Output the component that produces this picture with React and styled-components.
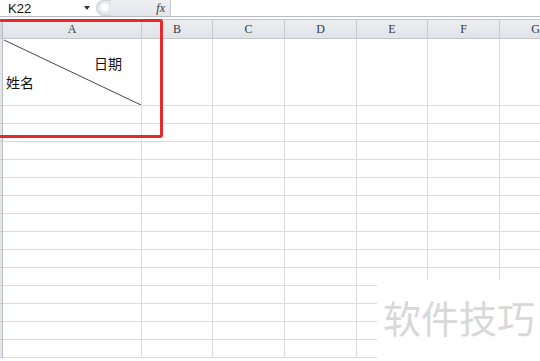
import React from 'react';
import styled, { createGlobalStyle } from 'styled-components';

const GlobalStyle = createGlobalStyle`
    * { box-sizing: border-box; }
    html, body {
        margin: 0;
        padding: 0;
        background: #ffffff;
        overflow: hidden;
    }
    body {
        font-family: "Liberation Sans", "Noto Sans CJK SC", sans-serif;
    }
`;

const COLS = ['A', 'B', 'C', 'D', 'E', 'F', 'G'];
const COL_TEMPLATE = '3px 139px 71px 72px 72px 71px 72px 72px';
const ROW_COUNT = 15;

const Page = styled.div`
    position: relative;
    width: 540px;
    height: 361px;
    overflow: hidden;
`;

const FormulaBar = styled.div`
    display: flex;
    height: 17px;
    background: #ffffff;
    border-bottom: 1px solid #b7bcc3;
`;

const NameBox = styled.div`
    width: 96px;
    display: flex;
    align-items: center;
    justify-content: space-between;
    padding: 0 6px 0 8px;
    font-size: 13px;
    color: #111;
`;

const DropArrow = styled.span`
    width: 0;
    height: 0;
    border-left: 3px solid transparent;
    border-right: 3px solid transparent;
    border-top: 4px solid #333;
`;

const ToolArea = styled.div`
    width: 75px;
    display: flex;
    align-items: stretch;
    justify-content: space-between;
    padding-right: 5px;
    background: linear-gradient(#eef0f3, #e2e5ea);
    border-right: 1px solid #c6cad0;
    border-radius: 9px 0 0 9px;
`;

const Knob = styled.span`
    width: 15px;
    border-radius: 9px 0 0 9px;
    background: radial-gradient(circle at 55% 45%, #ffffff 0 3px, #e6e9ed 5px, #d9dde2);
    border: 1px solid #cfd3d8;
    border-right: none;
`;

const Fx = styled.span`
    align-self: center;
    font-family: "Liberation Serif", serif;
    font-style: italic;
    font-size: 12px;
    color: #333;
`;

const FormulaInput = styled.div`
    flex: 1;
    background: #fff;
`;

const HeaderRow = styled.div`
    display: grid;
    grid-template-columns: ${COL_TEMPLATE};
    height: 20px;
    margin-top: 2px;
    border-top: 1px solid #c3c7cc;
    background: linear-gradient(#eceef1, #dfe3e8);
    border-bottom: 1px solid #c3c7cc;
`;

const ColHead = styled.div`
    display: flex;
    align-items: center;
    justify-content: center;
    border-right: 1px solid #c9cdd2;
    font-family: "Liberation Serif", serif;
    font-size: 12px;
    color: #3a3a3a;
`;

const Corner = styled.div`
    background: #d6dae0;
    border-right: 1px solid #b8bdc4;
`;

const Body = styled.div`
    display: grid;
    grid-template-columns: ${COL_TEMPLATE};
`;

const RowHead = styled.div`
    height: ${p => p.$h}px;
    background: #e3e6ea;
    border-right: 1px solid #b8bdc4;
    border-bottom: 1px solid #c9cdd2;
`;

const Cell = styled.div`
    position: relative;
    height: ${p => p.$h}px;
    border-right: 1px solid #dadcdf;
    border-bottom: 1px solid #dadcdf;
`;

const CellText = styled.span`
    position: absolute;
    left: ${p => p.$x}px;
    top: ${p => p.$y}px;
    font-family: "Noto Sans CJK SC", sans-serif;
    font-size: 14px;
    line-height: 1;
    color: #111;
`;

const Diagonal = styled.svg`
    position: absolute;
    inset: 0;
    width: 100%;
    height: 100%;
`;

const Highlight = styled.div`
    position: absolute;
    left: -4px;
    top: 19px;
    width: 167px;
    height: 119px;
    border: 3px solid #e42a2a;
    border-radius: 3px;
    pointer-events: none;
`;

const Watermark = styled.div`
    position: absolute;
    left: 377px;
    top: 280px;
    right: 0;
    bottom: 0;
    background: #ffffff;
    padding: 18px 0 0 6px;
    font-family: "Noto Sans CJK SC", sans-serif;
    font-size: 38px;
    line-height: 1;
    color: #d8d8d8;
    white-space: nowrap;
`;

function App() {
    const rows = Array.from({ length: ROW_COUNT }, (_, i) => (i === 0 ? 67 : 18));

    return (
        <Page>
            <GlobalStyle />
            <FormulaBar>
                <NameBox>
                    K22
                    <DropArrow />
                </NameBox>
                <ToolArea>
                    <Knob />
                    <Fx>fx</Fx>
                </ToolArea>
                <FormulaInput />
            </FormulaBar>

            <HeaderRow>
                <Corner />
                {COLS.map(c => (
                    <ColHead key={c}>{c}</ColHead>
                ))}
            </HeaderRow>

            <Body>
                {rows.map((h, r) => (
                    <React.Fragment key={r}>
                        <RowHead $h={h} />
                        {COLS.map((c, ci) => (
                            <Cell key={c} $h={h}>
                                {r === 0 && ci === 0 && (
                                    <>
                                        <Diagonal viewBox="0 0 139 67" preserveAspectRatio="none">
                                            <line x1="1" y1="1" x2="139" y2="67" stroke="#444" strokeWidth="1" />
                                        </Diagonal>
                                        <CellText $x={91} $y={17}>日期</CellText>
                                        <CellText $x={3} $y={36}>姓名</CellText>
                                    </>
                                )}
                            </Cell>
                        ))}
                    </React.Fragment>
                ))}
            </Body>

            <Highlight />
            <Watermark>软件技巧</Watermark>
        </Page>
    );
}

export default App;
